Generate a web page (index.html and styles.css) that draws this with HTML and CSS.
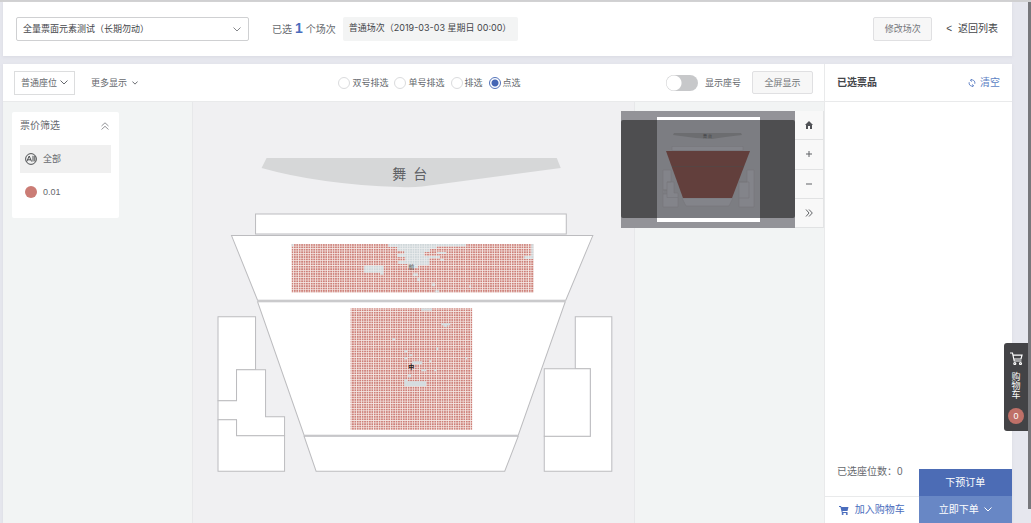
FILE: index.html
```html
<!DOCTYPE html>
<html lang="zh-CN">
<head>
<meta charset="utf-8">
<title>选座</title>
<link rel="stylesheet" href="styles.css">
</head>
<body>
<div class="page">
  <header class="session-bar">
    <div class="select-wrap event-select">
      <select aria-label="项目"><option>全量票面元素测试（长期勿动）</option></select>
      <svg class="chevron" viewBox="0 0 8 5"><path d="M.5.5 4 4 7.500.5"/></svg>
    </div>
    <p class="picked">已选<b>1</b>个场次</p>
    <span class="session-tag">普通场次（2019-03-03 星期日 00:00）</span>
    <button class="btn edit-session" type="button">修改场次</button>
    <a class="back" href="#"><span class="lt">&lt;</span>返回列表</a>
  </header>

  <div class="workspace">
    <main class="seating">
      <div class="toolbar">
        <div class="menus">
          <button class="menu-btn boxed" type="button">普通座位<svg class="chevron" viewBox="0 0 8 5"><path d="M.5.5 4 4 7.500.5"/></svg></button>
          <button class="menu-btn" type="button">更多显示<svg class="chevron small" viewBox="0 0 8 5"><path d="M.5.5 4 4 7.500.5"/></svg></button>
        </div>
        <div class="modes">
          <label><input type="radio" name="mode">双号排选</label>
          <label><input type="radio" name="mode">单号排选</label>
          <label><input type="radio" name="mode">排选</label>
          <label><input type="radio" name="mode" checked>点选</label>
        </div>
        <div class="view-tools">
          <label class="switch-label"><input class="switch" type="checkbox">显示座号</label>
          <button class="btn fullscreen" type="button">全屏显示</button>
        </div>
      </div>

      <div class="canvas">
        <div class="wing">
          <section class="filter">
            <h2>票价筛选<svg class="collapse" viewBox="0 0 8 8"><path d="M.5 4 4 .8 7.500 4M.5 7.500 4 4.300 7.500 7.500"/></svg></h2>
            <button class="price active" type="button"><svg class="dot" viewBox="0 0 12 12"><circle class="ring" cx="6" cy="6" r="5.400"/><path class="ring" d="M1.800 8.500 4.200 3 6.600 8.500M2.600 6.800h3.200M8 2.800v5.700M9.800 2.800v5.700"/></svg>全部</button>
            <button class="price" type="button"><svg class="dot" viewBox="0 0 12 12"><circle class="fill" cx="6" cy="6" r="6"/></svg>0.01</button>
          </section>
        </div>
        <div class="hall">
          <svg class="map" viewBox="193 102 441 421" role="img" aria-label="座位图">
            <defs>
              <pattern id="seat" width="2.420" height="2.420" patternUnits="userSpaceOnUse" x="291.500" y="244">
                <rect width="2.420" height="2.420" fill="#f6ebe8"/>
                <rect width="1.700" height="1.700" fill="#cd7f78"/>
              </pattern>
              <pattern id="sold" width="2.420" height="2.420" patternUnits="userSpaceOnUse" x="291.500" y="244">
                <rect width="2.420" height="2.420" fill="#eceeef"/>
                <rect width="1.750" height="1.750" fill="#ced6d9"/>
              </pattern>
            </defs>
            <path class="stage" d="M266.500 158H556.500L560.500 168 422 186.500Q411 187.800 400 187 320 184.500 261.500 168Z"/>
            <text class="stage-name" x="392" y="179">舞</text>
            <text class="stage-name" x="413" y="179">台</text>
            <g class="zone">
              <path d="M255.500 214H566V234H255.500Z"/>
              <path d="M231.500 235.500H592.500L565.500 300H257.500Z"/>
              <path d="M257.500 301.500H565L518 435H304Z"/>
              <path d="M304 436H518L504.500 471H316Z"/>
              <path d="M218 316.500H255.500V369.500H236.500V400.500H218Z"/>
              <path d="M236.500 369.500H265.500V416.500H284.500V435.500H236.500V419.500H218V400.500H236.500Z"/>
              <path d="M218 419.500H236.500V435.500H284.500V471H218Z"/>
              <path d="M575 316.500H611.500V471H544V436H590V368.500H575Z"/>
              <path d="M544 368.500H590V436H544Z"/>
            </g>
            <rect x="291.500" y="244" width="242" height="48.400" fill="url(#seat)"/>
            <rect x="350.500" y="308" width="121.500" height="121.500" fill="url(#seat)"/>
            <path fill="url(#sold)" d="M388 244H466V246.400H436V249H430V252H424V256H432V258H429V265H418V268H408V264H398V261H405V257H397V254H404V251H397V247H388ZM364 265.500H383.500V274.500H380V272.500H364ZM432 256H440V258H432ZM437 252H446V254H437ZM440 259H444V261H440ZM524 256H531V244H533.500V259H524ZM413 273H418V276H413ZM417 278H420V281H417ZM432 283H435V286H432ZM435 290H439V292.400H435ZM291.500 244H294V246.400H291.500ZM469 285H471V287.500H469Z"/>
            <path fill="#d5dde0" d="M421 308H432V310.500H421ZM441 323H450V325H447V327H444V325H441ZM392 338H395V340H392ZM404 350H407V352H404ZM409 354H412V356H409ZM412 361H422V364H412ZM404 357H407V359H404ZM429 360H431V362H429ZM436 347H438V350H436ZM421 369H426V371H421ZM434 369H436V371H434ZM465 357H467V359H465ZM408 374H411V377H408ZM404 379H407V381H426V386H404Z"/>
            <text class="zone-name" x="408" y="269">前</text>
            <text class="zone-name dark" x="408" y="369">中</text>
          </svg>
        </div>
        <div class="wing"></div>

        <div class="overview">
          <svg class="mini" viewBox="0 0 174 117" role="img" aria-label="缩略图">
            <rect width="174" height="117" fill="#939398"/>
            <rect y="9" width="174" height="98" rx="2" fill="#4e4e50"/>
            <rect x="36" y="6" width="103" height="105" fill="#fff"/>
            <rect x="36" y="9" width="103" height="98" fill="#7c7d82"/>
            <path fill="#6c6d70" d="M53 22H120L121 24Q103 26 91 28 71 27 52 24Z"/>
            <g fill="#83848a" stroke="#75767b" stroke-width=".6">
              <path d="M51 35.500H122V39.500H51Z"/>
              <path d="M61 87H112L108 95H65Z"/>
              <path d="M42 59H50V71H46V79H42ZM46 71H53V82H57V96H42V83H46V79H42V83"/>
              <path d="M46 83V86.500H57"/>
              <path d="M126 59H133V96H118V71H126ZM118 71H128V87H118"/>
            </g>
            <path fill="#623f3c" d="M45 40H129L111 87H62Z"/>
            <path stroke="#514746" stroke-width=".7" d="M51 55.500H123"/>
            <text class="mini-name" x="82" y="27">舞</text>
            <text class="mini-name" x="87" y="27">台</text>
          </svg>
          <div class="zoom">
            <button type="button" aria-label="复位"><svg viewBox="0 0 8 8"><path class="solid" d="M4 0 8 4H7V8H5V5H3V8H1V4H0Z"/></svg></button>
            <button type="button" aria-label="放大"><svg viewBox="0 0 8 8"><path d="M1 4H7M4 1V7"/></svg></button>
            <button type="button" aria-label="缩小"><svg viewBox="0 0 8 8"><path d="M1 4H7"/></svg></button>
            <button type="button" aria-label="收起"><svg viewBox="0 0 8 8"><path d="M1 .5 4 4 1 7.500M4 .5 7.300 4 4 7.500"/></svg></button>
          </div>
        </div>
      </div>
    </main>

    <aside class="basket">
      <div class="basket-head">
        <h2>已选票品</h2>
        <button class="clear" type="button"><svg viewBox="0 0 8 8"><path d="M2.400 1.300A3 3 0 0 1 6.800 4.800M5.600 6.700A3 3 0 0 1 1.200 3.200"/><path d="M4 .2 2.400 1.300 3.800 2.600M4 7.800 5.600 6.700 4.200 5.400"/></svg>清空</button>
      </div>
      <div class="basket-list"></div>
      <div class="actions">
        <p class="count">已选座位数：<span>0</span></p>
        <button class="preorder" type="button">下预订单</button>
        <button class="add" type="button"><svg viewBox="0 0 10 9"><path d="M0 0H2L2.400 1H9.500L8.500 5H3.400L3.700 6H8.500V7H2.900L1.400 1H0Z"/><circle cx="3.600" cy="8" r="1"/><circle cx="7.800" cy="8" r="1"/></svg>加入购物车</button>
        <button class="order" type="button">立即下单<svg class="chevron" viewBox="0 0 8 5"><path d="M.5.5 4 4 7.500.5"/></svg></button>
      </div>
    </aside>
  </div>
</div>

<button class="cart-tab" type="button">
  <svg viewBox="0 0 13 13"><path d="M0 1H2.500L4.200 9H11.500M3 3.200H12L11 7H4"/><circle cx="4.800" cy="11.500" r="1"/><circle cx="10.500" cy="11.500" r="1"/></svg>
  <span class="cart-text">购物车</span>
  <span class="cart-count">0</span>
</button>
<div class="scrollbar"></div>
</body>
</html>
```
FILE: styles.css
```css
* { box-sizing: border-box; }

body {
  margin: 0;
  background: #e6e7ee;
  color: #55585d;
  font: 10px/16px "Liberation Sans", "Noto Sans CJK SC", sans-serif;
  overflow: hidden;
}

h2, p { margin: 0; font-weight: 400; }

button, select, input { font: inherit; color: inherit; }

button {
  display: flex;
  align-items: center;
  justify-content: center;
  padding: 0;
  border: 0;
  background: none;
  cursor: pointer;
}

a { color: inherit; text-decoration: none; }

svg { display: block; flex: none; }

.page {
  display: flex;
  flex-direction: column;
  gap: 8px;
  height: 100vh;
  padding: 0 19px 0 3px;
  border-top: 2px solid #d0d0d1;
}

.chevron {
  width: 8px;
  height: 5px;
  fill: none;
  stroke: currentColor;
}

.chevron.small { width: 6px; height: 4px; stroke-width: 1.3; }

.btn {
  height: 24px;
  border: 1px solid #e0e0e2;
  border-radius: 2px;
  background: #f7f7f7;
  color: #74767a;
}

/* Session bar */
.session-bar {
  display: flex;
  align-items: center;
  height: 54px;
  padding: 0 14px 0 13px;
  background: #fff;
  box-shadow: 0 1px 3px #d9dae2;
  flex: none;
}

.select-wrap { position: relative; }

.select-wrap .chevron {
  position: absolute;
  right: 8px;
  top: 10px;
  color: #85878b;
  pointer-events: none;
}

.event-select { width: 233px; margin-right: 23px; }

.event-select select {
  display: block;
  width: 100%;
  height: 24px;
  padding: 0 24px 0 6px;
  border: 1px solid #cfd0d2;
  border-radius: 2px;
  background: #fff;
  color: #44464a;
  font-size: 9px;
  appearance: none;
}

.picked { font-size: 10px; color: #66696e; white-space: nowrap; }

.picked b { margin: 0 3px; font-size: 14px; color: #4a6dbd; }

.session-tag {
  height: 24px;
  margin-left: 7px;
  padding: 0 6px;
  border-radius: 2px;
  background: #f3f4f4;
  color: #44464a;
  font-family: Inter, "Noto Sans CJK SC", sans-serif;
  font-size: 9px;
  line-height: 22px;
  white-space: nowrap;
  min-width: 175px;
}

.edit-session { width: 59px; margin-left: auto; font-size: 9px; }

.back {
  display: flex;
  margin-left: 14px;
  color: #44464a;
  white-space: nowrap;
}

.lt { margin-right: 6px; }

/* Workspace */
.workspace {
  display: flex;
  flex: 1;
  min-height: 0;
  background: #fff;
  box-shadow: 0 1px 3px #d9dae2;
}

.seating {
  display: flex;
  flex-direction: column;
  flex: 1;
  min-width: 0;
}

.toolbar {
  display: grid;
  grid-template-columns: 1fr auto 1fr;
  align-items: center;
  height: 38px;
  padding: 0 11px;
  border-bottom: 1px solid #e9eaeb;
  font-size: 9px;
  color: #66696e;
  flex: none;
}

.menus { display: flex; gap: 16px; }

.menu-btn { gap: 3px; height: 24px; white-space: nowrap; }

.menu-btn.boxed { width: 61px; border: 1px solid #dcddde; }

.menu-btn:not(.boxed) { gap: 5px; }

.modes { display: flex; gap: 6px; margin-left: 32px; }

.modes label {
  display: flex;
  align-items: center;
  gap: 2px;
  white-space: nowrap;
}

.modes input {
  width: 12px;
  height: 12px;
  margin: 0;
  border: 1px solid #dadbdd;
  border-radius: 50%;
  background: #fff;
  appearance: none;
}

.modes input:checked {
  border-color: #5373ba;
  background: radial-gradient(circle, #4566b4 3px, #fff 4px);
}

.view-tools {
  display: flex;
  align-items: center;
  justify-content: flex-end;
  gap: 11px;
}

.switch-label { display: flex; align-items: center; gap: 7px; white-space: nowrap; }

.switch {
  width: 32px;
  height: 16px;
  margin: 0;
  border-radius: 8px;
  background: radial-gradient(circle at 8px 8px, #fff 7px, #c7c8ca 8px);
  appearance: none;
}

.fullscreen { width: 61px; height: 23px; }

.canvas {
  position: relative;
  display: grid;
  grid-template-columns: 1fr 54% 1fr;
  flex: 1;
  min-height: 0;
  overflow: hidden;
}

.wing { padding: 10px 9px; background: #f2f4f4; }

.hall {
  border: 1px solid #e7e8ea;
  border-width: 0 1px;
  background: #f0f0f2;
  min-width: 0;
}

.map { width: 100%; }

.stage { fill: #d6d7d8; }

.stage-name { fill: #606266; font-size: 14px; }

.zone path { fill: #fff; stroke: #bcbcbf; stroke-width: 1; }

.zone-name { fill: #555; font-size: 6px; }

.zone-name.dark { fill: #222; font-weight: 700; }

/* Price filter */
.filter {
  width: 107px;
  padding: 6px 8px 12px;
  border-radius: 2px;
  background: #fff;
}

.filter h2 {
  display: flex;
  align-items: center;
  justify-content: space-between;
  height: 16px;
  margin-bottom: 11px;
  padding-right: 2px;
  font-size: 10px;
  color: #66696e;
}

.collapse { width: 8px; height: 8px; fill: none; stroke: #77797d; stroke-width: .8; }

.price {
  justify-content: flex-start;
  gap: 6px;
  width: 91px;
  height: 28px;
  padding-left: 5px;
  font-size: 9px;
  color: #66696e;
}

.price + .price { margin-top: 5px; }

.price.active { background: #f0f0f0; }

.dot { width: 12px; height: 12px; }

.dot .ring { fill: none; stroke: #3d3f42; stroke-width: .9; }

.dot .fill { fill: #cb7c75; }

/* Overview map */
.overview {
  position: absolute;
  top: 9px;
  right: 0;
  display: flex;
}

.mini { width: 174px; height: 117px; }

.mini-name { fill: #414246; font-size: 4px; }

.zoom { display: flex; flex-direction: column; border-right: 1px solid #e3e4e5; }

.zoom button {
  width: 28px;
  flex: 1;
  border-bottom: 1px solid #e1e2e3;
  background: #f8f8f8;
}

.zoom svg { width: 8px; height: 8px; fill: none; stroke: #606266; }

.zoom .solid { fill: #505256; stroke: none; }

/* Basket */
.basket {
  display: flex;
  flex-direction: column;
  width: 188px;
  border-left: 1px solid #e9eaeb;
  flex: none;
}

.basket-head {
  display: flex;
  align-items: center;
  justify-content: space-between;
  height: 38px;
  padding: 0 12px;
  border-bottom: 1px solid #e9eaeb;
  flex: none;
}

.basket-head h2 { font-size: 10px; font-weight: 700; color: #44464a; }

.clear { gap: 4px; color: #5c7fc4; }

.clear svg { width: 8px; height: 8px; fill: none; stroke: currentColor; stroke-width: .9; }

.basket-list { flex: 1; }

.actions {
  display: grid;
  grid-template-columns: 1fr 1fr;
  grid-template-rows: 27px 27px;
}

.count {
  align-self: start;
  padding-left: 12px;
  margin-top: -5px;
  white-space: nowrap;
  color: #66696e;
}

.preorder { background: #4c6cb5; color: #fff; }

.add { gap: 6px; border-top: 1px solid #e9eaeb; color: #4a6dbd; }

.add svg { width: 10px; height: 9px; fill: currentColor; }

.order { gap: 5px; background: #6887c5; color: #fff; }

/* Floating cart */
.cart-tab {
  position: fixed;
  right: 3px;
  top: 343px;
  flex-direction: column;
  gap: 8px;
  width: 24px;
  padding: 9px 0 7px;
  border-radius: 3px 0 0 3px;
  background: #434346;
  color: #fff;
}

.cart-tab svg { width: 13px; height: 13px; fill: none; stroke: #fff; stroke-width: 1.2; }

.cart-text { width: 9px; font-size: 9px; line-height: 9px; }

.cart-count {
  width: 16px;
  height: 16px;
  border-radius: 50%;
  background: #bf7068;
  font-size: 9px;
  line-height: 16px;
}

.scrollbar {
  position: fixed;
  top: 2px;
  right: 0;
  bottom: 14px;
  width: 3px;
  background: #77777b;
}
```
